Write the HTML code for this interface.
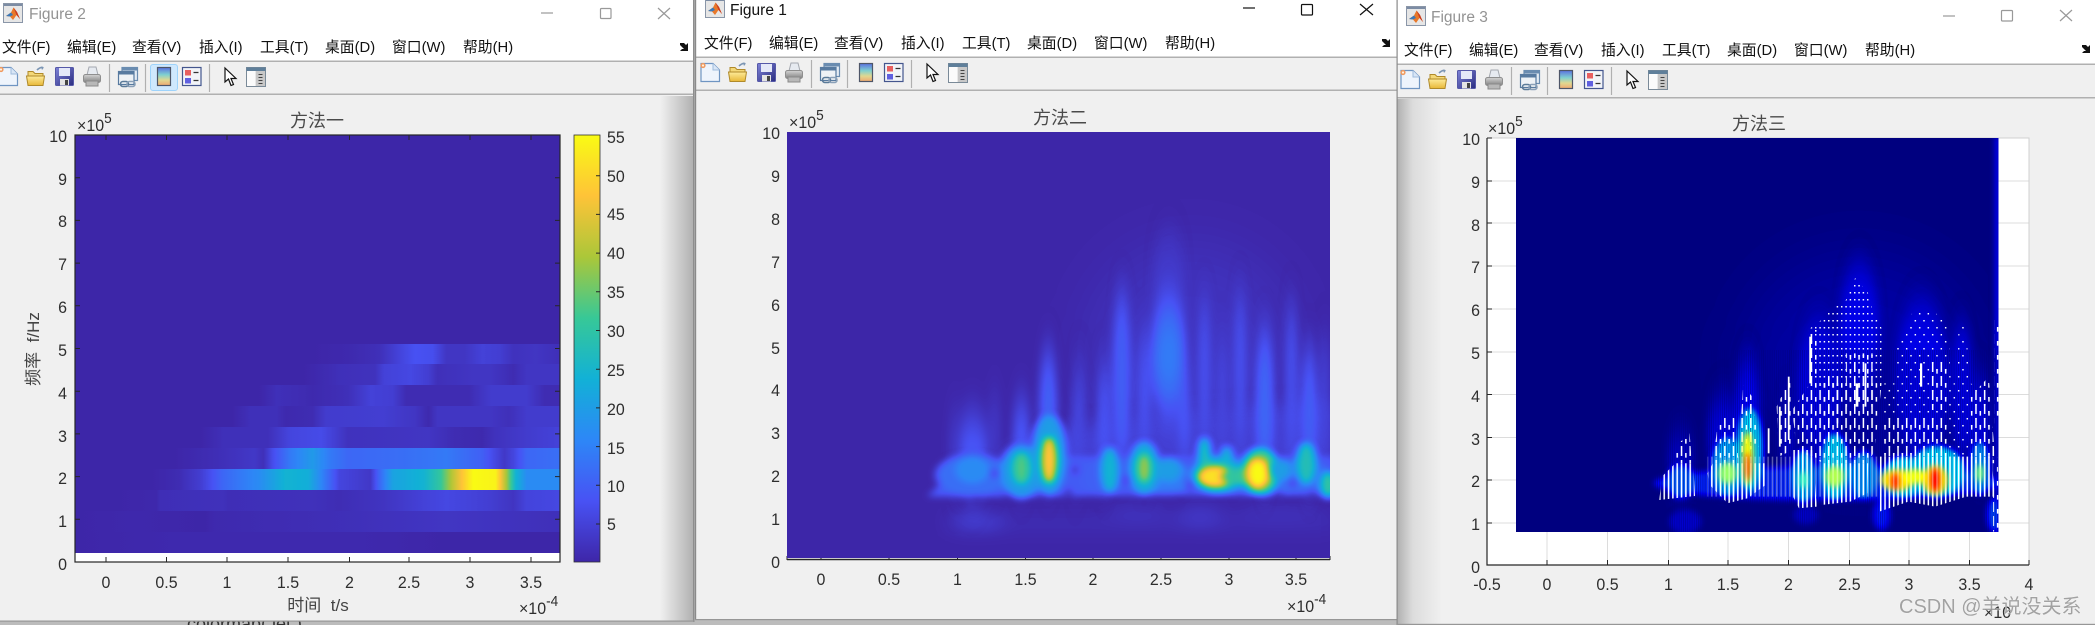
<!DOCTYPE html>
<html><head><meta charset="utf-8"><style>
html,body{margin:0;padding:0;background:#bcbcbc;width:2095px;height:625px;overflow:hidden}
svg{display:block;font-family:"Liberation Sans","Noto Sans CJK SC",sans-serif}
.m{font-size:14.800px;fill:#111}
.n{font-size:17px;fill:#2e2e2e;transform-box:fill-box;transform-origin:left;transform:scaleX(.94)}
.e{text-anchor:end;transform-origin:right}.c{text-anchor:middle;transform-origin:center}
.ti{font-size:18px;fill:#4a4a4a;text-anchor:middle}
</style></head><body>
<svg width="2095" height="625" viewBox="0 0 2095 625" xmlns="http://www.w3.org/2000/svg">
<defs>
<filter id="par" filterUnits="userSpaceOnUse" x="0" y="0" width="2095" height="625" color-interpolation-filters="sRGB"><feComponentTransfer>
<feFuncR type="table" tableValues=".2422 .2810 .1786 .0689 .2161 .6720 .9970 .9769"/>
<feFuncG type="table" tableValues=".1504 .3228 .5289 .6948 .7843 .7793 .7659 .9839"/>
<feFuncB type="table" tableValues=".6603 .9579 .9682 .8394 .5923 .2227 .2199 .0805"/>
</feComponentTransfer></filter>
<filter id="jet" filterUnits="userSpaceOnUse" x="0" y="0" width="2095" height="625" color-interpolation-filters="sRGB"><feComponentTransfer>
<feFuncR type="table" tableValues="0 0 0 0 .5 1 1 1 .5"/>
<feFuncG type="table" tableValues="0 0 .5 1 1 1 .5 0 0"/>
<feFuncB type="table" tableValues=".5 1 1 1 .5 0 0 0 0"/>
</feComponentTransfer></filter>
<filter id="b4" filterUnits="userSpaceOnUse" x="0" y="0" width="2095" height="625" color-interpolation-filters="sRGB"><feGaussianBlur stdDeviation="4 3.5"/></filter>
<filter id="b3" filterUnits="userSpaceOnUse" x="0" y="0" width="2095" height="625" color-interpolation-filters="sRGB"><feGaussianBlur stdDeviation="3"/></filter>
<filter id="b10" filterUnits="userSpaceOnUse" x="0" y="0" width="2095" height="625" color-interpolation-filters="sRGB"><feGaussianBlur stdDeviation="10 8"/></filter>
<filter id="b30" filterUnits="userSpaceOnUse" x="0" y="0" width="2095" height="625" color-interpolation-filters="sRGB"><feGaussianBlur stdDeviation="30"/></filter>
<filter id="bs" filterUnits="userSpaceOnUse" x="0" y="0" width="2095" height="625" color-interpolation-filters="sRGB"><feGaussianBlur stdDeviation="4.500 20"/></filter>
<filter id="bs3" filterUnits="userSpaceOnUse" x="0" y="0" width="2095" height="625" color-interpolation-filters="sRGB"><feGaussianBlur stdDeviation="4 16"/></filter>
<clipPath id="c1"><rect x="787" y="132" width="543" height="426"/></clipPath>
<clipPath id="c3"><rect x="1516" y="138" width="482.500" height="394"/></clipPath>
<linearGradient id="shR" x1="0" x2="1" y1="0" y2="0"><stop offset="0" stop-color="#aaa" stop-opacity="0"/><stop offset="1" stop-color="#a8a8a8" stop-opacity=".9"/></linearGradient>
<linearGradient id="shL" x1="0" x2="1" y1="0" y2="0"><stop offset="0" stop-color="#b0b0b0"/><stop offset=".35" stop-color="#dcdcdc"/><stop offset="1" stop-color="#f0f0f0"/></linearGradient>
<linearGradient id="cb" x1="0" x2="0" y1="1" y2="0"><stop offset="0" stop-color="#3e26a8"/><stop offset=".143" stop-color="#4852f4"/><stop offset=".286" stop-color="#2d87f7"/><stop offset=".429" stop-color="#12b1d6"/><stop offset=".571" stop-color="#37c897"/><stop offset=".714" stop-color="#abc739"/><stop offset=".857" stop-color="#fec338"/><stop offset="1" stop-color="#f9fb14"/></linearGradient>
<linearGradient id="ci" x1="0" x2="0" y1="0" y2="1"><stop offset="0" stop-color="#5a70e0"/><stop offset=".4" stop-color="#7fd0d0"/><stop offset=".7" stop-color="#e0d890"/><stop offset="1" stop-color="#f0a870"/></linearGradient>
<linearGradient id="fo" x1="0" x2="0" y1="0" y2="1"><stop offset="0" stop-color="#fdeb9a"/><stop offset="1" stop-color="#e8b838"/></linearGradient>
<linearGradient id="sv" x1="0" x2="1" y1="0" y2="1"><stop offset="0" stop-color="#7f84d8"/><stop offset="1" stop-color="#2a2c80"/></linearGradient>
<linearGradient id="pr" x1="0" x2="0" y1="0" y2="1"><stop offset="0" stop-color="#d4d4d4"/><stop offset="1" stop-color="#808080"/></linearGradient>
<pattern id="pd" patternUnits="userSpaceOnUse" width="9.700" height="21"><rect width="3.300" height="4.500" fill="#fff"/></pattern>
<pattern id="pd2" patternUnits="userSpaceOnUse" width="19.400" height="42"><rect width="3.300" height="4.500" fill="#fff"/><rect x="9.700" y="21" width="3.300" height="4.500" fill="#fff"/></pattern>
<pattern id="pl" patternUnits="userSpaceOnUse" width="19.400" height="42"><rect width="3.400" height="30" fill="#fff"/><rect x="9.700" y="21" width="3.400" height="14" fill="#fff"/></pattern>
<pattern id="ps" patternUnits="userSpaceOnUse" width="9.700" height="21"><rect width="3.400" height="21" fill="#fff"/></pattern>
<pattern id="st" patternUnits="userSpaceOnUse" width="4.850" height="21"><rect width="2.200" height="21" fill="#00007f"/></pattern>

<g id="logo">
<rect x="0.500" y="0.500" width="19" height="19" fill="#e6e6e6" stroke="#8a96a8"/><rect x="1" y="1" width="18" height="2" fill="#7c8ca4"/>
<path d="M3 13L8 9.500 10.500 4.500 14 9 17 16 13.500 12 10 17 7 13.500z" fill="#e8782a"/><path d="M3 13L8 9.500 10 12 7 13.500z" fill="#3a78b8"/><path d="M10.500 4.500L14 9 17 16 13.500 12z" fill="#c93a20"/>
</g>
<g id="tb">
<path d="M-1 67.500H11L17.500 74V85.500H-1z" fill="#eef4fc" stroke="#6f95c2" stroke-width="1.200"/><path d="M11 67.500V74H17.500" fill="#d8e6f6" stroke="#9fbbdc"/>
<circle cx="1" cy="69.500" r="2.600" fill="#f09a60"/><circle cx="1" cy="69.500" r="1.100" fill="#fff2e0"/>
<path d="M28 71.500h5l2 2h8v3H28z" fill="#f4d878" stroke="#b08a2a"/><path d="M26.500 76h18l-1.500 9.500H28z" fill="url(#fo)" stroke="#b08a2a"/><path d="M37 70q3-3 6-2.500" fill="none" stroke="#7c96b4" stroke-width="1.600"/><path d="M41 66.500l3 1-2 2.500z" fill="#7c96b4"/>
<rect x="55.500" y="67.500" width="18" height="18" rx="1" fill="url(#sv)" stroke="#5558a8"/><rect x="59" y="68" width="11" height="8" fill="#e4e8f8"/><rect x="60" y="79" width="9" height="6.500" fill="#e4e4e4"/><rect x="65" y="80" width="3" height="5" fill="#444"/>
<path d="M87 75l2-8h7l2 8z" fill="#e6eaf0" stroke="#a4a8b0"/><rect x="83.500" y="74.500" width="17" height="8" rx="2" fill="url(#pr)" stroke="#8e8e8e"/><rect x="86" y="81" width="12" height="5" fill="#b8b8b8" stroke="#8a8a8a"/>
<path d="M109.500 64V92" stroke="#b0b0b0" stroke-width="1.200"/>
<rect x="122" y="67.500" width="15.500" height="13" fill="#e4ecf4" stroke="#6a8cb0" stroke-width="1.200"/><rect x="122" y="67.500" width="15.500" height="3" fill="#6a8cb0"/>
<rect x="118.500" y="71.500" width="15.500" height="13" fill="#eef2f6" stroke="#577aa0" stroke-width="1.200"/><rect x="118.500" y="71.500" width="15.500" height="3" fill="#577aa0"/>
<rect x="120.500" y="81.500" width="8" height="5" rx="2.500" fill="none" stroke="#5a7a98" stroke-width="1.600"/><rect x="127" y="81.500" width="8" height="5" rx="2.500" fill="none" stroke="#8aa0b8" stroke-width="1.600"/>
<path d="M145.500 64V92" stroke="#b0b0b0" stroke-width="1.200"/>
<rect x="157.500" y="67.500" width="13" height="18" fill="url(#ci)" stroke="#4e5668" stroke-width="1.200"/>
<rect x="182.500" y="67.500" width="18.500" height="18" fill="#f2f4f8" stroke="#44568e" stroke-width="1.200"/><rect x="185" y="70" width="6" height="5.500" fill="#e86060"/><rect x="185" y="78" width="6" height="5.500" fill="#6060e0"/><path d="M193.500 72.500h5M193.500 80.500h5" stroke="#333" stroke-width="1.300"/>
<path d="M209.500 64V92" stroke="#b0b0b0" stroke-width="1.200"/>
<path d="M225 68L225 82 228.500 79 231 85.500 233.500 84.500 231 78.500 236 78.500z" fill="#fff" stroke="#111" stroke-width="1.200"/>
<rect x="246.500" y="67.500" width="19" height="19" fill="#e8e8e8" stroke="#7a8a98"/><rect x="246.500" y="67.500" width="19" height="3.500" fill="#5f7f9a"/><rect x="247" y="71" width="8" height="15" fill="#fbfbfb"/><rect x="256" y="71" width="9" height="15" fill="#c8c8c8"/><path d="M258.500 74.500h4M258.500 77.500h4M258.500 80.500h4M258.500 83.500h4" stroke="#444" stroke-width="1.100"/>
</g>
<path id="ar" d="M0 0L4 0 6 2 8 0 8 8 0 8 2 6 4 6 0 2z"/>

<linearGradient id="r1" gradientUnits="userSpaceOnUse" x1="0" x2="2000"><stop offset=".35" stop-color="#000"/><stop offset=".39" stop-color="#030303"/><stop offset=".425" stop-color="#080808"/><stop offset=".45" stop-color="#1a1a1a"/><stop offset=".465" stop-color="#242424"/><stop offset=".485" stop-color="#212121"/><stop offset=".5" stop-color="#0d0d0d"/><stop offset=".52" stop-color="#0d0d0d"/><stop offset=".54" stop-color="#171717"/><stop offset=".56" stop-color="#141414"/><stop offset=".575" stop-color="#0a0a0a"/><stop offset=".6" stop-color="#0d0d0d"/><stop offset=".625" stop-color="#080808"/></linearGradient>
<linearGradient id="r2" gradientUnits="userSpaceOnUse" x1="0" x2="2000"><stop offset=".34" stop-color="#000"/><stop offset=".38" stop-color="#080808"/><stop offset=".42" stop-color="#0a0a0a"/><stop offset=".43" stop-color="#171717"/><stop offset=".46" stop-color="#1c1c1c"/><stop offset=".48" stop-color="#141414"/><stop offset=".49" stop-color="#080808"/><stop offset=".53" stop-color="#0d0d0d"/><stop offset=".55" stop-color="#0d0d0d"/><stop offset=".575" stop-color="#050505"/><stop offset=".59" stop-color="#0d0d0d"/><stop offset=".625" stop-color="#0d0d0d"/></linearGradient>
<linearGradient id="r3" gradientUnits="userSpaceOnUse" x1="0" x2="2000"><stop offset=".29" stop-color="#000"/><stop offset=".31" stop-color="#080808"/><stop offset=".34" stop-color="#050505"/><stop offset=".35" stop-color="#030303"/><stop offset=".39" stop-color="#080808"/><stop offset=".415" stop-color="#171717"/><stop offset=".44" stop-color="#141414"/><stop offset=".455" stop-color="#050505"/><stop offset=".525" stop-color="#050505"/><stop offset=".55" stop-color="#121212"/><stop offset=".59" stop-color="#121212"/><stop offset=".61" stop-color="#050505"/><stop offset=".625" stop-color="#050505"/></linearGradient>
<linearGradient id="r4" gradientUnits="userSpaceOnUse" x1="0" x2="2000"><stop offset=".26" stop-color="#000"/><stop offset=".28" stop-color="#080808"/><stop offset=".31" stop-color="#080808"/><stop offset=".32" stop-color="#030303"/><stop offset=".35" stop-color="#050505"/><stop offset=".365" stop-color="#121212"/><stop offset=".43" stop-color="#141414"/><stop offset=".465" stop-color="#0d0d0d"/><stop offset=".48" stop-color="#030303"/><stop offset=".49" stop-color="#0d0d0d"/><stop offset=".55" stop-color="#0d0d0d"/><stop offset=".57" stop-color="#080808"/><stop offset=".59" stop-color="#121212"/><stop offset=".625" stop-color="#121212"/></linearGradient>
<linearGradient id="r5" gradientUnits="userSpaceOnUse" x1="0" x2="2000"><stop offset=".225" stop-color="#000"/><stop offset=".25" stop-color="#080808"/><stop offset=".3" stop-color="#080808"/><stop offset=".325" stop-color="#1a1a1a"/><stop offset=".36" stop-color="#1f1f1f"/><stop offset=".39" stop-color="#0a0a0a"/><stop offset=".48" stop-color="#0d0d0d"/><stop offset=".51" stop-color="#050505"/><stop offset=".54" stop-color="#030303"/><stop offset=".555" stop-color="#0a0a0a"/><stop offset=".59" stop-color="#121212"/><stop offset=".625" stop-color="#171717"/></linearGradient>
<linearGradient id="r6" gradientUnits="userSpaceOnUse" x1="0" x2="2000"><stop offset=".195" stop-color="#000"/><stop offset=".25" stop-color="#080808"/><stop offset=".285" stop-color="#0f0f0f"/><stop offset=".295" stop-color="#080808"/><stop offset=".305" stop-color="#1f1f1f"/><stop offset=".325" stop-color="#404040"/><stop offset=".35" stop-color="#595959"/><stop offset=".37" stop-color="#404040"/><stop offset=".39" stop-color="#333"/><stop offset=".45" stop-color="#383838"/><stop offset=".5" stop-color="#404040"/><stop offset=".54" stop-color="#2e2e2e"/><stop offset=".565" stop-color="#0f0f0f"/><stop offset=".575" stop-color="#1a1a1a"/><stop offset=".59" stop-color="#333"/><stop offset=".625" stop-color="#383838"/></linearGradient>
<linearGradient id="r7" gradientUnits="userSpaceOnUse" x1="0" x2="2000"><stop offset=".17" stop-color="#000"/><stop offset=".2" stop-color="#050505"/><stop offset=".225" stop-color="#141414"/><stop offset=".25" stop-color="#333"/><stop offset=".29" stop-color="#4d4d4d"/><stop offset=".32" stop-color="#707070"/><stop offset=".345" stop-color="#6b6b6b"/><stop offset=".365" stop-color="#3d3d3d"/><stop offset=".38" stop-color="#1a1a1a"/><stop offset=".415" stop-color="#0f0f0f"/><stop offset=".425" stop-color="#333"/><stop offset=".44" stop-color="#616161"/><stop offset=".475" stop-color="#707070"/><stop offset=".4925" stop-color="#8c8c8c"/><stop offset=".5075" stop-color="#bfbfbf"/><stop offset=".53" stop-color="#fff"/><stop offset=".555" stop-color="#fafafa"/><stop offset=".5675" stop-color="#b3b3b3"/><stop offset=".5775" stop-color="#707070"/><stop offset=".59" stop-color="#4d4d4d"/><stop offset=".6275" stop-color="#4d4d4d"/></linearGradient>
<linearGradient id="r8" gradientUnits="userSpaceOnUse" x1="0" x2="2000"><stop offset=".13" stop-color="#000"/><stop offset=".175" stop-color="#020202"/><stop offset=".18" stop-color="#070707"/><stop offset=".25" stop-color="#090909"/><stop offset=".255" stop-color="#070707"/><stop offset=".35" stop-color="#090909"/><stop offset=".38" stop-color="#060606"/><stop offset=".43" stop-color="#0c0c0c"/><stop offset=".475" stop-color="#171717"/><stop offset=".5" stop-color="#1c1c1c"/><stop offset=".55" stop-color="#141414"/><stop offset=".575" stop-color="#0c0c0c"/><stop offset=".59" stop-color="#191919"/><stop offset=".6275" stop-color="#1c1c1c"/></linearGradient>
<linearGradient id="r9" gradientUnits="userSpaceOnUse" x1="0" x2="2000"><stop offset=".084" stop-color="#000"/><stop offset=".15" stop-color="#020202"/><stop offset=".23" stop-color="#000"/><stop offset=".24" stop-color="#030303"/><stop offset=".4" stop-color="#080808"/><stop offset=".5" stop-color="#0d0d0d"/><stop offset=".6275" stop-color="#080808"/></linearGradient>
<linearGradient id="r10" gradientUnits="userSpaceOnUse" x1="0" x2="2000"><stop offset=".084" stop-color="#000"/><stop offset=".2" stop-color="#030303"/><stop offset=".4" stop-color="#030303"/><stop offset=".5" stop-color="#000"/><stop offset=".6275" stop-color="#000"/></linearGradient>
</defs>

<rect width="2095" height="625" fill="#bcbcbc"/>
<text x="187" y="630" font-size="18" fill="#333">colormap( jet )</text>

<!-- FIGURE 2 WINDOW -->
<rect x="0" y="0" width="694" height="621" fill="#f0f0f0"/>
<rect x="0" y="0" width="694" height="61" fill="#fff"/>
<rect x="660" y="96" width="34" height="525" fill="url(#shR)"/>
<rect x="0" y="60.500" width="694" height="1.500" fill="#b0b0b0"/><rect x="0" y="93.500" width="694" height="1.500" fill="#b0b0b0"/>
<rect x="693" y="0" width="1.500" height="622" fill="#8e8e8e"/><rect x="0" y="620.500" width="694" height="1.200" fill="#969696"/>
<use href="#logo" transform="translate(3,3)"/>
<text x="29" y="19" font-size="15.500" fill="#939393">Figure 2</text>
<path d="M541 13h12" stroke="#999" stroke-width="1.200"/><rect x="600.500" y="8.500" width="10.500" height="10" rx="1" fill="none" stroke="#999" stroke-width="1.200"/><path d="M658 8L670 19M670 8L658 19" stroke="#999" stroke-width="1.200"/>
<text x="2" y="52" class="m">文件(F)</text><text x="67" y="52" class="m">编辑(E)</text><text x="132" y="52" class="m">查看(V)</text><text x="199" y="52" class="m">插入(I)</text><text x="260" y="52" class="m">工具(T)</text><text x="325" y="52" class="m">桌面(D)</text><text x="392" y="52" class="m">窗口(W)</text><text x="463" y="52" class="m">帮助(H)</text>
<use href="#ar" transform="translate(680,43)" fill="#111"/>
<rect x="150.500" y="64.500" width="27" height="26" rx="2.500" fill="#cfe8fd" stroke="#9ed3fb"/>
<use href="#tb"/>

<text x="317" y="127" class="ti">方法一</text>
<text x="77" y="131" class="n">×10<tspan dy="-8" font-size="14.500">5</tspan></text>
<rect x="75" y="135" width="485" height="427" fill="#fff"/>
<g filter="url(#par)">
<rect x="75" y="135" width="485" height="418" fill="#000"/>
<g transform="scale(.4464 1)">
<rect x="168" y="344" width="1087" height="20.500" fill="url(#r1)"/>
<rect x="168" y="364" width="1087" height="21.500" fill="url(#r2)"/>
<rect x="168" y="385" width="1087" height="21.500" fill="url(#r3)"/>
<rect x="168" y="406" width="1087" height="21.500" fill="url(#r4)"/>
<rect x="168" y="427" width="1087" height="21.500" fill="url(#r5)"/>
<rect x="168" y="448" width="1087" height="21.500" fill="url(#r6)"/>
<rect x="168" y="469" width="1087" height="21.500" fill="url(#r7)"/>
<rect x="168" y="490" width="1087" height="21.500" fill="url(#r8)"/>
<rect x="168" y="511" width="1087" height="21.500" fill="url(#r9)"/>
<rect x="168" y="532" width="1087" height="21" fill="url(#r10)"/>
</g></g>
<path d="M75 177.700h5M75 220.400h5M75 263.100h5M75 305.800h5M75 348.500h5M75 391.200h5M75 433.900h5M75 476.600h5M75 519.300h5M560 177.700h-5M560 220.400h-5M560 263.100h-5M560 305.800h-5M560 348.500h-5M560 391.200h-5M560 433.900h-5M560 476.600h-5M560 519.300h-5M106 135v5M166.500 135v5M227 135v5M288 135v5M349.500 135v5M409 135v5M470 135v5M531 135v5M106 562v-5M166.500 562v-5M227 562v-5M288 562v-5M349.500 562v-5M409 562v-5M470 562v-5M531 562v-5" stroke="#262626" stroke-width="1"/>
<rect x="75" y="135" width="485" height="427" fill="none" stroke="#262626" stroke-width="1.200"/>
<rect x="574" y="135" width="26" height="427" fill="url(#cb)" stroke="#333" stroke-width=".800"/>
<path d="M600 524h-4M600 485.300h-4M600 446.600h-4M600 407.900h-4M600 369.200h-4M600 330.500h-4M600 291.800h-4M600 253.100h-4M600 214.400h-4M600 175.700h-4" stroke="#262626"/>
<text class="n" x="607" y="143">55</text><text class="n" x="607" y="182">50</text><text class="n" x="607" y="220">45</text><text class="n" x="607" y="259">40</text><text class="n" x="607" y="298">35</text><text class="n" x="607" y="337">30</text><text class="n" x="607" y="376">25</text><text class="n" x="607" y="415">20</text><text class="n" x="607" y="454">15</text><text class="n" x="607" y="492">10</text><text class="n" x="607" y="530">5</text>
<text class="n e" x="67" y="142">10</text><text class="n e" x="67" y="185">9</text><text class="n e" x="67" y="227">8</text><text class="n e" x="67" y="270">7</text><text class="n e" x="67" y="313">6</text><text class="n e" x="67" y="356">5</text><text class="n e" x="67" y="399">4</text><text class="n e" x="67" y="442">3</text><text class="n e" x="67" y="484">2</text><text class="n e" x="67" y="527">1</text><text class="n e" x="67" y="570">0</text>
<text class="n c" x="106" y="588">0</text><text class="n c" x="166.500" y="588">0.5</text><text class="n c" x="227" y="588">1</text><text class="n c" x="288" y="588">1.5</text><text class="n c" x="349.500" y="588">2</text><text class="n c" x="409" y="588">2.5</text><text class="n c" x="470" y="588">3</text><text class="n c" x="531" y="588">3.5</text>
<text x="318" y="611" font-size="17" fill="#444" text-anchor="middle">时间&#160;&#160;t/s</text>
<text transform="translate(39,349) rotate(-90)" font-size="17" fill="#444" text-anchor="middle">频率&#160;&#160;f/Hz</text>
<text x="519" y="614" class="n">×10<tspan dy="-8" font-size="14.500">-4</tspan></text>

<!-- FIGURE 1 WINDOW -->
<rect x="695" y="0" width="701.500" height="619.500" fill="#f0f0f0"/>
<rect x="695" y="0" width="701.500" height="57" fill="#fff"/>
<rect x="695" y="56.500" width="701.500" height="1.500" fill="#b0b0b0"/><rect x="695" y="89.500" width="701.500" height="1.500" fill="#b0b0b0"/>
<rect x="695" y="0" width="1.200" height="620" fill="#8a8a8a"/><rect x="695" y="619" width="702" height="1.200" fill="#969696"/>
<use href="#logo" transform="translate(705,-2)"/>
<text x="730" y="15" font-size="15.500" fill="#111">Figure 1</text>
<path d="M1243 8h12" stroke="#111" stroke-width="1.200"/><rect x="1301.500" y="4.500" width="11" height="10.500" rx="1" fill="none" stroke="#111" stroke-width="1.200"/><path d="M1360 4L1373 15M1373 4L1360 15" stroke="#111" stroke-width="1.200"/>
<text x="704" y="48" class="m">文件(F)</text><text x="769" y="48" class="m">编辑(E)</text><text x="834" y="48" class="m">查看(V)</text><text x="901" y="48" class="m">插入(I)</text><text x="962" y="48" class="m">工具(T)</text><text x="1027" y="48" class="m">桌面(D)</text><text x="1094" y="48" class="m">窗口(W)</text><text x="1165" y="48" class="m">帮助(H)</text>
<use href="#ar" transform="translate(1382,39)" fill="#111"/>
<use href="#tb" transform="translate(702,-4)"/>
<text x="1060" y="124" class="ti">方法二</text>
<text x="789" y="128" class="n">×10<tspan dy="-8" font-size="14.500">5</tspan></text>
<rect x="787" y="132" width="543" height="428" fill="#fff"/>
<path d="M787 559.500H1330" stroke="#262626" stroke-width="1.400"/>
<path d="M821 560v-4M889 560v-4M957.500 560v-4M1025.500 560v-4M1093 560v-4M1161 560v-4M1229 560v-4M1296 560v-4M787 560v-4M1330 560v-4" stroke="#262626"/>
<g clip-path="url(#c1)"><g filter="url(#par)">
<rect x="787" y="132" width="543" height="426" fill="#000"/>
<g filter="url(#b30)"><g transform="translate(700,300) scale(.4464,.3333)">
<ellipse cx="1100" cy="150" rx="230" ry="320" fill="#0b0b0b"/>
</g></g>
<g filter="url(#b10)"><g transform="translate(700,300) scale(.4464,.3333)">
<rect x="560" y="640" width="860" height="60" fill="#050505"/>
<ellipse cx="620" cy="665" rx="60" ry="24" fill="#171717"/><ellipse cx="1120" cy="650" rx="50" ry="30" fill="#101010"/><ellipse cx="980" cy="640" rx="70" ry="20" fill="#0c0c0c"/><ellipse cx="1300" cy="640" rx="100" ry="20" fill="#0a0a0a"/>
<polygon points="560,560 760,390 1100,330 1420,300 1420,560" fill="#141414"/>
</g></g>
<g filter="url(#bs)"><g transform="translate(700,300) scale(.4464,.3333)">
<ellipse cx="1050" cy="-50" rx="36" ry="130" fill="#111111"/>
<ellipse cx="1050" cy="170" rx="40" ry="170" fill="#383838"/><ellipse cx="1050" cy="170" rx="24" ry="100" fill="#424242"/>
<ellipse cx="945" cy="230" rx="20" ry="250" fill="#2e2e2e"/><ellipse cx="995" cy="280" rx="16" ry="190" fill="#242424"/>
<ellipse cx="850" cy="350" rx="16" ry="160" fill="#1a1a1a"/><ellipse cx="905" cy="360" rx="16" ry="170" fill="#262626"/>
<ellipse cx="1130" cy="220" rx="14" ry="220" fill="#242424"/><ellipse cx="1085" cy="330" rx="14" ry="150" fill="#292929"/>
<ellipse cx="1210" cy="210" rx="14" ry="230" fill="#242424"/><ellipse cx="1170" cy="280" rx="12" ry="180" fill="#1c1c1c"/>
<ellipse cx="1265" cy="310" rx="20" ry="220" fill="#333"/><ellipse cx="1325" cy="250" rx="14" ry="240" fill="#242424"/>
<ellipse cx="1365" cy="340" rx="18" ry="200" fill="#2e2e2e"/><ellipse cx="1400" cy="300" rx="10" ry="200" fill="#1c1c1c"/>
<ellipse cx="780" cy="340" rx="20" ry="190" fill="#303030"/><ellipse cx="720" cy="420" rx="20" ry="120" fill="#292929"/>
<ellipse cx="610" cy="460" rx="36" ry="110" fill="#292929"/><ellipse cx="660" cy="400" rx="14" ry="120" fill="#0f0f0f"/><ellipse cx="570" cy="450" rx="14" ry="120" fill="#0f0f0f"/><ellipse cx="840" cy="420" rx="10" ry="130" fill="#1c1c1c"/>
</g></g>
<g filter="url(#b4)"><g transform="translate(700,300) scale(.4464,.3333)">
<polygon points="510,590 560,520 700,470 1420,470 1420,585 1000,585 700,590" fill="#2b2b2b"/>
<ellipse cx="610" cy="525" rx="82" ry="62" fill="#383838"/><ellipse cx="610" cy="510" rx="38" ry="40" fill="#4d4d4d"/>
<ellipse cx="900" cy="530" rx="46" ry="58" fill="#2e2e2e"/>
<ellipse cx="1040" cy="535" rx="70" ry="46" fill="#404040"/>
<ellipse cx="1250" cy="530" rx="170" ry="55" fill="#383838"/>
<ellipse cx="720" cy="515" rx="46" ry="80" fill="#595959"/><ellipse cx="720" cy="505" rx="20" ry="48" fill="#999"/>
<ellipse cx="782" cy="465" rx="38" ry="120" fill="#5c5c5c"/><ellipse cx="782" cy="480" rx="17" ry="70" fill="#e0e0e0"/>
<ellipse cx="918" cy="510" rx="20" ry="68" fill="#707070"/>
<ellipse cx="995" cy="505" rx="34" ry="80" fill="#666"/><ellipse cx="995" cy="505" rx="16" ry="45" fill="#b0b0b0"/>
<ellipse cx="1050" cy="510" rx="30" ry="36" fill="#5c5c5c"/>
<ellipse cx="1160" cy="525" rx="56" ry="56" fill="#707070"/><ellipse cx="1130" cy="470" rx="14" ry="58" fill="#808080"/><ellipse cx="1180" cy="480" rx="14" ry="42" fill="#707070"/>
<ellipse cx="1155" cy="530" rx="40" ry="32" fill="#eeeeee"/>
<ellipse cx="1225" cy="530" rx="58" ry="28" fill="#8c8c8c"/>
<ellipse cx="1255" cy="515" rx="42" ry="70" fill="#999"/><ellipse cx="1250" cy="520" rx="25" ry="44" fill="#ffffff"/>
<ellipse cx="1300" cy="510" rx="26" ry="32" fill="#5c5c5c"/>
<ellipse cx="1358" cy="490" rx="22" ry="62" fill="#808080"/>
<ellipse cx="1408" cy="555" rx="18" ry="40" fill="#8c8c8c"/>
<g fill="#000"><ellipse cx="660" cy="520" rx="5" ry="14"/><ellipse cx="840" cy="510" rx="5" ry="14"/><ellipse cx="585" cy="610" rx="7" ry="12"/><ellipse cx="620" cy="600" rx="7" ry="12"/><ellipse cx="690" cy="590" rx="6" ry="12"/><ellipse cx="768" cy="592" rx="6" ry="12"/><ellipse cx="825" cy="578" rx="6" ry="12"/><ellipse cx="895" cy="605" rx="7" ry="12"/><ellipse cx="955" cy="540" rx="5" ry="14"/><ellipse cx="995" cy="605" rx="7" ry="12"/><ellipse cx="1062" cy="600" rx="7" ry="12"/><ellipse cx="1097" cy="555" rx="5" ry="16"/><ellipse cx="1210" cy="595" rx="7" ry="12"/><ellipse cx="1295" cy="585" rx="7" ry="12"/><ellipse cx="1328" cy="550" rx="5" ry="14"/><ellipse cx="1372" cy="585" rx="5" ry="12"/></g>
</g></g>
</g></g>
<text class="n e" x="780" y="139">10</text><text class="n e" x="780" y="182">9</text><text class="n e" x="780" y="225">8</text><text class="n e" x="780" y="268">7</text><text class="n e" x="780" y="311">6</text><text class="n e" x="780" y="354">5</text><text class="n e" x="780" y="396">4</text><text class="n e" x="780" y="439">3</text><text class="n e" x="780" y="482">2</text><text class="n e" x="780" y="525">1</text><text class="n e" x="780" y="568">0</text>
<text class="n c" x="821" y="585">0</text><text class="n c" x="889" y="585">0.5</text><text class="n c" x="957.500" y="585">1</text><text class="n c" x="1025.500" y="585">1.5</text><text class="n c" x="1093" y="585">2</text><text class="n c" x="1161" y="585">2.5</text><text class="n c" x="1229" y="585">3</text><text class="n c" x="1296" y="585">3.5</text>
<text x="1287" y="612" class="n">×10<tspan dy="-8" font-size="14.500">-4</tspan></text>

<!-- FIGURE 3 WINDOW -->
<rect x="1397" y="0" width="698" height="624" fill="#f0f0f0"/>
<rect x="1397" y="0" width="698" height="64" fill="#fff"/>
<rect x="1397" y="99" width="45" height="525" fill="url(#shL)"/>
<rect x="1397" y="63.500" width="698" height="1.500" fill="#b0b0b0"/><rect x="1397" y="97" width="698" height="1.500" fill="#b0b0b0"/>
<rect x="1396.500" y="0" width="1.200" height="625" fill="#8a8a8a"/><rect x="1397" y="623.800" width="698" height="1.200" fill="#969696"/>
<use href="#logo" transform="translate(1406,6)"/>
<text x="1431" y="22" font-size="15.500" fill="#939393">Figure 3</text>
<path d="M1943 16h12" stroke="#999" stroke-width="1.200"/><rect x="2001.500" y="10.500" width="11" height="10.500" rx="1" fill="none" stroke="#999" stroke-width="1.200"/><path d="M2060 10L2072 21M2072 10L2060 21" stroke="#999" stroke-width="1.200"/>
<text x="1404" y="55" class="m">文件(F)</text><text x="1469" y="55" class="m">编辑(E)</text><text x="1534" y="55" class="m">查看(V)</text><text x="1601" y="55" class="m">插入(I)</text><text x="1662" y="55" class="m">工具(T)</text><text x="1727" y="55" class="m">桌面(D)</text><text x="1794" y="55" class="m">窗口(W)</text><text x="1865" y="55" class="m">帮助(H)</text>
<use href="#ar" transform="translate(2082,45)" fill="#111"/>
<use href="#tb" transform="translate(1402,3)"/>
<text x="1759" y="130" class="ti">方法三</text>
<text x="1488" y="134" class="n">×10<tspan dy="-8" font-size="14.500">5</tspan></text>
<rect x="1487" y="138" width="542" height="427" fill="#fff"/>
<path d="M1547 138V565M1607.500 138V565M1668.500 138V565M1728 138V565M1788.500 138V565M1849.500 138V565M1909 138V565M1969.500 138V565M1487 523H2029M1487 480H2029M1487 437.500H2029M1487 394.500H2029M1487 352H2029M1487 309H2029M1487 266H2029M1487 223H2029M1487 181H2029" stroke="#dcdcdc" stroke-width="1"/>
<path d="M1487 138H2029V565" fill="none" stroke="#d0d0d0"/>
<path d="M1487 138V565H2029" fill="none" stroke="#262626" stroke-width="1.200"/>
<path d="M1487 138h5M1487 181h5M1487 223h5M1487 266h5M1487 309h5M1487 352h5M1487 394.500h5M1487 437.500h5M1487 480h5M1487 523h5M1547 565v-5M1607.500 565v-5M1668.500 565v-5M1728 565v-5M1788.500 565v-5M1849.500 565v-5M1909 565v-5M1969.500 565v-5M2029 565v-5" stroke="#262626"/>
<g clip-path="url(#c3)">
<g filter="url(#jet)">
<rect x="1516" y="138" width="483" height="394" fill="#000"/>
<g filter="url(#b30)"><g transform="translate(1395,250) scale(.4464,.3333)">
<ellipse cx="1040" cy="340" rx="260" ry="330" fill="#090909"/>
</g></g>
<g filter="url(#bs3)"><g transform="translate(1395,250) scale(.4464,.3333)">
<ellipse cx="1040" cy="250" rx="46" ry="200" fill="#1a1a1a"/><ellipse cx="950" cy="420" rx="50" ry="200" fill="#1a1a1a"/><ellipse cx="1180" cy="400" rx="60" ry="240" fill="#1a1a1a"/><ellipse cx="1270" cy="430" rx="26" ry="200" fill="#1a1a1a"/>
<ellipse cx="790" cy="500" rx="28" ry="170" fill="#1f1f1f"/><ellipse cx="735" cy="560" rx="36" ry="120" fill="#1a1a1a"/><ellipse cx="640" cy="640" rx="32" ry="90" fill="#141414"/><ellipse cx="880" cy="560" rx="18" ry="110" fill="#141414"/><ellipse cx="1310" cy="530" rx="24" ry="150" fill="#1a1a1a"/>
</g></g>
<g filter="url(#b3)"><g transform="translate(1395,250) scale(.4464,.3333)">
<rect x="1344" y="-340" width="12" height="1200" fill="#1f1f1f"/>
<ellipse cx="970" cy="700" rx="390" ry="52" fill="#292929"/>
<ellipse cx="650" cy="815" rx="36" ry="36" fill="#141414"/><ellipse cx="1090" cy="795" rx="20" ry="46" fill="#262626"/><ellipse cx="1340" cy="795" rx="14" ry="50" fill="#333"/><ellipse cx="920" cy="795" rx="28" ry="28" fill="#121212"/>
<ellipse cx="640" cy="695" rx="32" ry="50" fill="#383838"/>
<ellipse cx="745" cy="650" rx="36" ry="88" fill="#4d4d4d"/>
<ellipse cx="795" cy="600" rx="30" ry="125" fill="#595959"/>
<ellipse cx="915" cy="680" rx="26" ry="80" fill="#4d4d4d"/>
<ellipse cx="985" cy="650" rx="32" ry="100" fill="#595959"/>
<ellipse cx="1050" cy="675" rx="32" ry="70" fill="#474747"/>
<ellipse cx="1140" cy="680" rx="48" ry="62" fill="#595959"/>
<ellipse cx="1215" cy="665" rx="62" ry="78" fill="#595959"/>
<ellipse cx="1310" cy="655" rx="22" ry="80" fill="#474747"/>
</g></g>
</g>
<g transform="translate(1395,250) scale(.4464,.3333)">
<rect x="570" y="300" width="790" height="545" fill="url(#st)" opacity=".5"/>
<polygon fill="url(#pd)" points="1032,80 1060,130 1070,180 1092,240 1092,330 930,330 925,240 965,200 975,180 1010,150"/>
<polygon fill="url(#pd2)" points="1162,180 1205,180 1240,230 1245,400 1120,400 1120,290"/>
<polygon fill="url(#pd2)" points="1270,205 1282,280 1285,400 1260,400 1262,250"/>
<polygon fill="url(#pl)" points="1342,205 1352,205 1352,520 1342,520"/>
<polygon fill="url(#pl)" points="926,240 945,240 945,400 926,400"/>
<polygon fill="url(#pl)" points="1010,310 1070,310 1070,470 1010,470"/>
<polygon fill="url(#pl)" points="960,380 1000,380 1000,520 960,520"/>
<polygon fill="url(#pl)" points="1200,330 1240,330 1240,480 1200,480"/>
<polygon fill="url(#pd)" points="930,330 1090,330 1090,400 930,400"/>
<polygon fill="url(#pl)" points="930,400 1090,400 1075,600 1060,640 960,640 900,600 890,480"/>
<polygon fill="url(#pd2)" points="1095,400 1290,400 1330,440 1335,620 1090,620"/>
<polygon fill="url(#pl)" points="1095,500 1240,500 1240,620 1095,620"/>
<polygon fill="url(#pl)" points="855,470 885,385 890,600 860,620"/>
<polygon fill="url(#pl)" points="780,405 800,440 815,590 770,610"/>
<polygon fill="url(#pl)" points="725,500 760,500 770,640 712,640"/>
<polygon fill="url(#pl)" points="628,590 660,550 665,640 625,640"/>
<polygon fill="url(#ps)" points="598,680 628,640 668,640 672,738 592,750"/>
<polygon fill="url(#ps)" points="700,670 712,640 830,640 830,705 790,745 745,760 705,705"/>
<polygon fill="url(#ps)" points="890,600 935,600 945,770 905,775 888,730"/>
<polygon fill="url(#ps)" points="955,640 1060,640 1058,730 1020,755 955,765"/>
<polygon fill="url(#ps)" points="1085,620 1335,620 1345,740 1280,740 1210,770 1150,755 1085,785"/>
<polygon fill="url(#pl)" points="1290,440 1330,380 1345,640 1290,640"/>
<polygon fill="url(#pl)" points="1350,620 1353,845 1340,845 1340,740"/>
<g fill="#fff"><rect x="1176" y="340" width="5" height="70"/><rect x="1032" y="400" width="6" height="70"/><rect x="1052" y="340" width="4" height="130"/><rect x="928" y="260" width="4" height="140"/><rect x="880" y="380" width="4" height="190"/><rect x="860" y="470" width="4" height="120"/><rect x="835" y="535" width="4" height="75"/></g>
</g>
<g filter="url(#jet)"><g filter="url(#b3)"><g transform="translate(1395,250) scale(.4464,.3333)">
<ellipse cx="745" cy="670" rx="20" ry="32" fill="#858585"/>
<ellipse cx="790" cy="625" rx="12" ry="80" fill="#a0a0a0"/><ellipse cx="790" cy="650" rx="5" ry="42" fill="#d9d9d9"/>
<ellipse cx="985" cy="680" rx="20" ry="32" fill="#8c8c8c"/>
<ellipse cx="915" cy="690" rx="10" ry="26" fill="#707070"/>
<ellipse cx="1125" cy="690" rx="36" ry="32" fill="#a6a6a6"/><ellipse cx="1165" cy="680" rx="26" ry="22" fill="#9c9c9c"/>
<ellipse cx="1120" cy="695" rx="9" ry="26" fill="#d9d9d9"/>
<ellipse cx="1210" cy="690" rx="28" ry="44" fill="#a8a8a8"/><ellipse cx="1210" cy="690" rx="9" ry="36" fill="#e6e6e6"/>
<ellipse cx="1310" cy="670" rx="9" ry="26" fill="#808080"/>
</g></g></g>
<g transform="translate(1395,250) scale(.4464,.3333)"><rect x="700" y="620" width="640" height="120" fill="url(#ps)" opacity=".35"/></g>
</g>
<text class="n e" x="1480" y="145">10</text><text class="n e" x="1480" y="188">9</text><text class="n e" x="1480" y="231">8</text><text class="n e" x="1480" y="273">7</text><text class="n e" x="1480" y="316">6</text><text class="n e" x="1480" y="359">5</text><text class="n e" x="1480" y="402">4</text><text class="n e" x="1480" y="445">3</text><text class="n e" x="1480" y="487">2</text><text class="n e" x="1480" y="530">1</text><text class="n e" x="1480" y="573">0</text>
<text class="n c" x="1487" y="590">-0.5</text><text class="n c" x="1547" y="590">0</text><text class="n c" x="1607.500" y="590">0.5</text><text class="n c" x="1668.500" y="590">1</text><text class="n c" x="1728" y="590">1.5</text><text class="n c" x="1788.500" y="590">2</text><text class="n c" x="1849.500" y="590">2.5</text><text class="n c" x="1909" y="590">3</text><text class="n c" x="1969.500" y="590">3.5</text><text class="n c" x="2029" y="590">4</text>
<text x="1984" y="618" class="n">×10</text>
<text x="1899" y="613" font-size="20" fill="#9a9a9a" stroke="#fff" stroke-width=".4" paint-order="stroke" opacity=".9">CSDN @羊说没关系</text>
</svg>
</body></html>
